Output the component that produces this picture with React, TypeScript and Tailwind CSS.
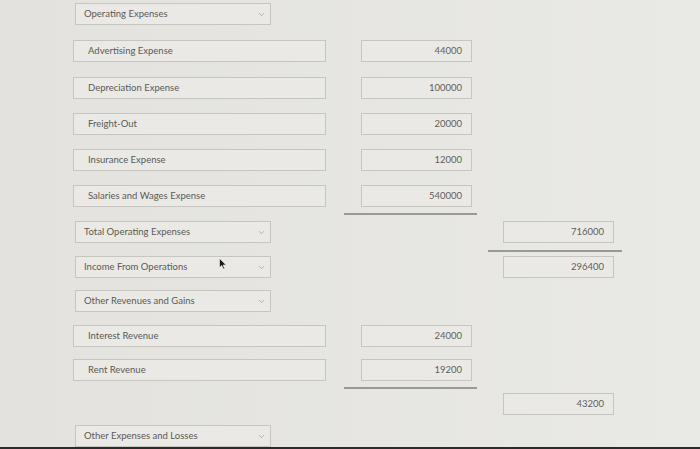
import { ChevronDown } from "lucide-react";

type Row = {
  kind: "select" | "input" | "line";
  label?: string;
  amount?: string;
  total?: string;
  mt: string;
  lineCol?: "amount" | "total";
  cursor?: boolean;
};

// Statement rows, top to bottom
const rows: Row[] = [
  { kind: "select", label: "Operating Expenses", mt: "mt-[3px]" },
  { kind: "input", label: "Advertising Expense", amount: "44000", mt: "mt-[15px]" },
  { kind: "input", label: "Depreciation Expense", amount: "100000", mt: "mt-[15px]" },
  { kind: "input", label: "Freight-Out", amount: "20000", mt: "mt-[14px]" },
  { kind: "input", label: "Insurance Expense", amount: "12000", mt: "mt-[14px]" },
  { kind: "input", label: "Salaries and Wages Expense", amount: "540000", mt: "mt-[14px]" },
  { kind: "line", lineCol: "amount", mt: "mt-[6px]" },
  { kind: "select", label: "Total Operating Expenses", total: "716000", mt: "mt-[6px]" },
  { kind: "line", lineCol: "total", mt: "mt-[7px]" },
  { kind: "select", label: "Income From Operations", total: "296400", mt: "mt-[4px]", cursor: true },
  { kind: "select", label: "Other Revenues and Gains", mt: "mt-[12px]" },
  { kind: "input", label: "Interest Revenue", amount: "24000", mt: "mt-[13px]" },
  { kind: "input", label: "Rent Revenue", amount: "19200", mt: "mt-[12px]" },
  { kind: "line", lineCol: "amount", mt: "mt-[6px]" },
  { kind: "select", label: "", total: "43200", mt: "mt-[4px]" },
  { kind: "select", label: "Other Expenses and Losses", mt: "mt-[10px]" },
];

const boxCls = "h-[22px] border border-[#c6c5c0] bg-[#eae9e5] flex items-center";

function AmountBox({ value }: { value: string }) {
  return (
    <div className={`${boxCls} w-[111px] justify-end pr-[9px] text-[#5e5e5b]`}>{value}</div>
  );
}

function Cursor() {
  return (
    <svg width="8" height="12" viewBox="0 0 8 12" className="ml-[-52px] mt-[-6px]">
      <path d="M0.5 0.5 L0.5 9.5 L2.8 7.5 L4.3 11 L5.6 10.4 L4.1 7 L7.2 7 Z" fill="#1a1a1a" stroke="#f2f2f2" strokeWidth="0.6" />
    </svg>
  );
}

export default function App() {
  return (
    <div className="w-[700px] h-[449px] overflow-hidden flex flex-col bg-gradient-to-r from-[#e3e2de] to-[#e9e9e6] text-[9.5px] text-[#5a5a57] font-['Lato','Liberation_Sans',sans-serif]">
      <div className="flex-1 flex flex-col pl-[73px]">
        {rows.map((r, i) => {
          if (r.kind === "line") {
            return (
              <div key={i} className={`${r.mt} flex`}>
                <div className={r.lineCol === "amount" ? "ml-[271px] w-[133px] h-[2px] bg-[#9a9995]" : "ml-[415px] w-[134px] h-[2px] bg-[#9a9995]"} />
              </div>
            );
          }
          return (
            <div key={i} className={`${r.mt} flex items-center`}>
              {r.kind === "select" ? (
                r.label !== "" ? (
                  <div className={`${boxCls} w-[196px] pl-[8px] pr-[4px] justify-between ml-[2px]`}>
                    <span>{r.label}</span>
                    <ChevronDown size={9} strokeWidth={1.5} className="text-[#8a8a87]" />
                  </div>
                ) : (
                  <div className="w-[198px] h-[22px]" />
                )
              ) : (
                <div className={`${boxCls} w-[253px] pl-[14px]`}>{r.label}</div>
              )}
              {r.cursor && <Cursor />}
              {r.amount && (
                <div className="ml-[35px]">
                  <AmountBox value={r.amount} />
                </div>
              )}
              {r.total && (
                <div className={r.kind === "select" ? (r.cursor ? "ml-[276px]" : "ml-[232px]") : ""}>
                  <AmountBox value={r.total} />
                </div>
              )}
            </div>
          );
        })}
      </div>
      <div className="h-[5px] bg-[#2b2b2b]" />
    </div>
  );
}
